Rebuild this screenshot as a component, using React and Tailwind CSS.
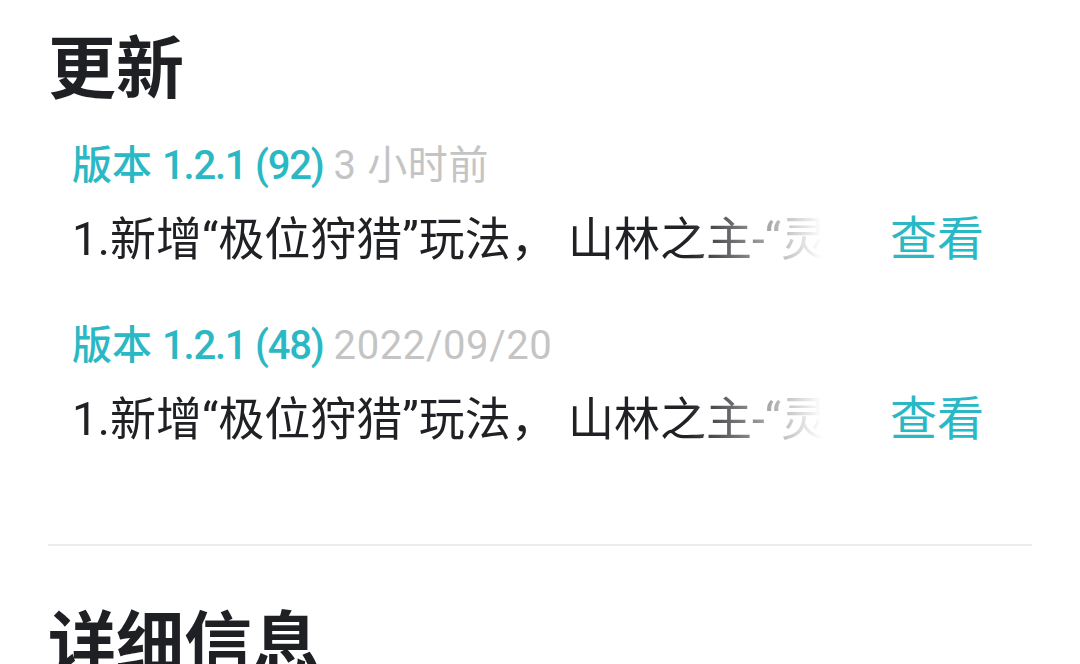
export default function App() {
  const font = { fontFamily: 'Roboto, "Noto Sans CJK SC", sans-serif' };
  const items = [
    { ver: "版本", num: "1.2.1 (92)", time: "3 小时前" },
    { ver: "版本", num: "1.2.1 (48)", time: "2022/09/20" },
  ];
  return (
    <div className="w-[1080px] h-[664px] overflow-hidden bg-white px-12" style={font}>
      <h2 className="mt-[30px] text-[68px] leading-[80px] font-bold text-[#1f2024]">更新</h2>
      <div className="mt-[32px] flex flex-col gap-[53px] pl-6 pr-12">
        {items.map((it, i) => (
          <div key={i} className="flex flex-col">
            <div className="h-[48px] text-[40px] leading-[48px] font-medium whitespace-nowrap">
              <span className="text-[#2ab8c4]">
                {it.ver} <span className="tracking-[-1.2px]">{it.num}</span>
              </span>{" "}
              <span className="font-normal tracking-[0.6px] text-[#c4c4c4]">{it.time}</span>
            </div>
            <div className="mt-[19px] flex h-[60px] items-center">
              <div className="w-[750px] overflow-hidden whitespace-nowrap text-[46px] leading-[60px] text-[#202124] [mask-image:linear-gradient(to_right,black_82%,transparent_100%)]">
                1.新增“极位狩猎”玩法， 山林之主-“灵鬃”
              </div>
              <div className="ml-auto text-[47px] leading-[60px] text-[#2ab8c4]">查看</div>
            </div>
          </div>
        ))}
      </div>
      <div className="mt-[95px] h-[2px] bg-[#ececec]" />
      <h2 className="mt-[59px] text-[68px] leading-[80px] font-bold text-[#1f2024]">详细信息</h2>
    </div>
  );
}
